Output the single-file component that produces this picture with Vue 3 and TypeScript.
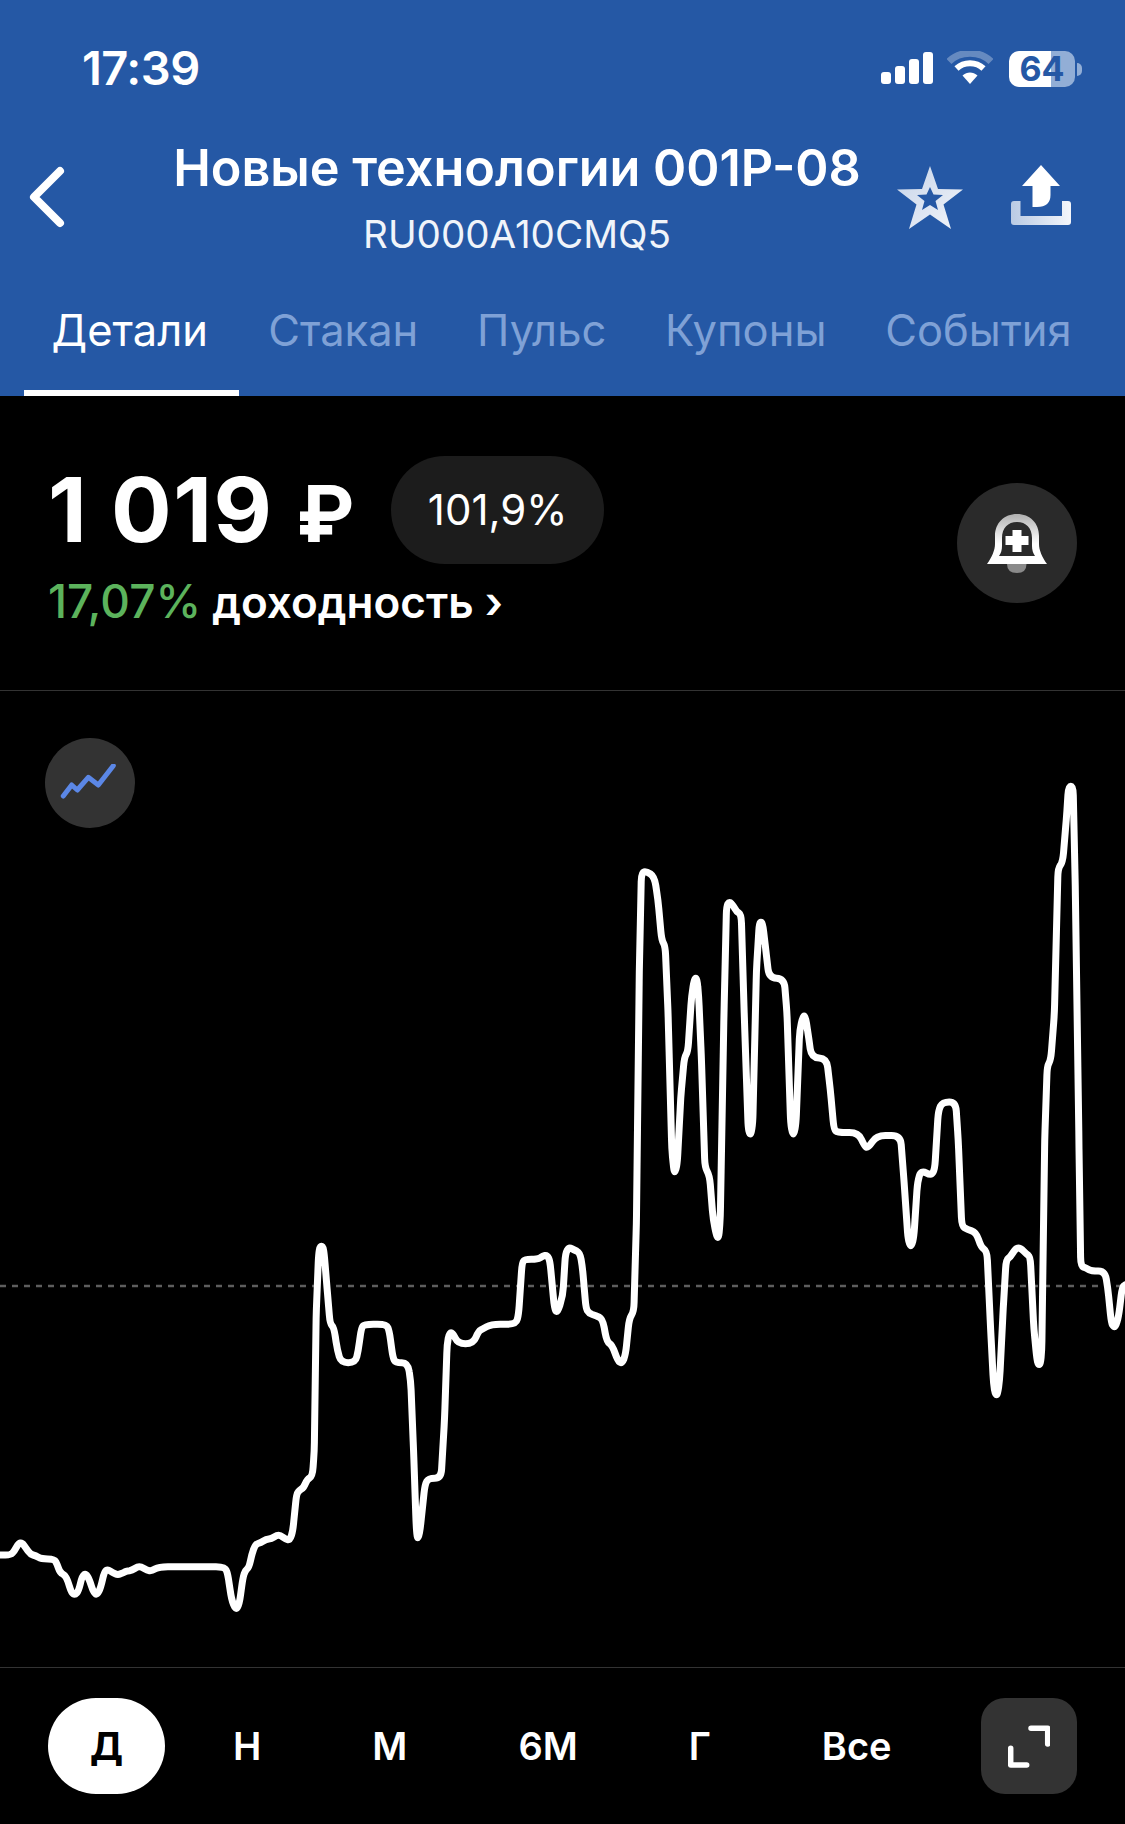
<script setup lang="ts">
type Pt = [number, number]

// line traced from the two chart crops, brought back to page coordinates
const leftRaw: Pt[] = [[0,1212],[30,1212],[40,1200],[52,1177],[62,1175],[72,1190],[85,1210],[100,1214],[115,1224],[152,1224],[160,1240],[168,1265],[182,1272],[190,1290],[200,1325],[210,1332],[220,1320],[230,1275],[240,1268],[250,1285],[262,1325],[272,1332],[282,1310],[292,1262],[302,1255],[315,1265],[330,1272],[345,1265],[355,1260],[370,1258],[385,1247],[395,1247],[412,1258],[425,1260],[445,1247],[630,1247],[638,1270],[648,1345],[660,1378],[670,1360],[680,1280],[687,1258],[697,1250],[705,1210],[715,1180],[730,1175],[745,1165],[760,1163],[775,1153],[785,1153],[800,1165],[812,1167],[820,1140],[830,1030],[838,1018],[850,1010],[860,985],[875,975],[880,900],[885,500],[892,310],[896,286],[904,286],[908,310],[918,440],[924,518],[935,530],[945,600],[955,635],[995,635],[1003,600],[1012,530],[1020,520],[1082,520],[1090,540],[1100,620],[1108,635],[1142,635],[1150,690],[1158,900],[1165,1120],[1168,1160],[1172,1160],[1177,1130],[1190,1000],[1200,982],[1235,982],[1245,800],[1252,580],[1258,545],[1268,545],[1282,578],[1325,578],[1340,540],[1350,535],[1375,520],[1445,520],[1452,490],[1462,335],[1470,325],[1505,325],[1520,315],[1532,312],[1540,330],[1552,470],[1560,488]]
const rightRaw: Pt[] = [[8,1270],[15,1170],[25,1155],[40,1162],[55,1168],[62,1200],[72,1300],[80,1312],[100,1318],[118,1325],[130,1380],[145,1388],[160,1425],[172,1432],[182,1410],[192,1325],[205,1308],[212,1100],[220,500],[226,265],[240,262],[262,275],[272,330],[282,425],[292,440],[300,600],[310,920],[316,976],[321,976],[326,950],[335,800],[345,705],[355,690],[365,560],[373,516],[380,516],[385,560],[392,700],[402,965],[415,985],[425,1090],[435,1132],[441,1132],[445,1080],[455,600],[462,345],[470,333],[482,345],[490,358],[503,365],[512,620],[522,870],[526,886],[530,886],[535,860],[545,500],[553,383],[562,383],[570,440],[580,515],[622,517],[630,600],[640,860],[645,886],[650,886],[655,860],[665,640],[674,606],[681,606],[687,640],[698,705],[740,707],[750,780],[760,875],[770,883],[828,883],[845,915],[855,920],[878,890],[945,890],[955,1000],[965,1130],[971,1152],[976,1152],[982,1130],[992,1000],[1002,972],[1030,985],[1040,970],[1050,830],[1062,810],[1098,810],[1105,900],[1115,1105],[1130,1113],[1155,1120],[1168,1155],[1185,1165],[1195,1350],[1203,1480],[1208,1506],[1214,1506],[1220,1470],[1230,1300],[1238,1185],[1250,1178],[1265,1157],[1278,1157],[1295,1172],[1305,1178],[1315,1350],[1323,1420],[1327,1434],[1333,1434],[1337,1400],[1345,900],[1352,725],[1362,710],[1372,600],[1382,255],[1395,240],[1405,140],[1411,60],[1424,60],[1430,300],[1440,900],[1445,1200],[1460,1205],[1475,1212],[1512,1212],[1520,1250],[1530,1335],[1536,1344],[1542,1344],[1550,1320],[1560,1250],[1568,1245]]

const points: Pt[] = [
  ...leftRaw.map(([x, y]): Pt => [x / 2.8, 1150 + y / 3]),
  ...rightRaw.map(([x, y]): Pt => [560 + x / 2.775, 760 + y / 2.376]),
]

// rounds each corner, but only over the last few px so the flat parts stay flat
function smooth(pts: Pt[], radius = 9) {
  const f = (n: number) => n.toFixed(1)
  let d = `M${f(pts[0][0])} ${f(pts[0][1])}`
  for (let i = 1; i < pts.length - 1; i++) {
    const [x, y] = pts[i]
    const [px, py] = pts[i - 1]
    const [nx, ny] = pts[i + 1]
    const t1 = Math.min(0.5, radius / Math.hypot(px - x, py - y))
    const t2 = Math.min(0.5, radius / Math.hypot(nx - x, ny - y))
    d += ` L${f(x + (px - x) * t1)} ${f(y + (py - y) * t1)}`
    d += ` Q${f(x)} ${f(y)} ${f(x + (nx - x) * t2)} ${f(y + (ny - y) * t2)}`
  }
  const last = pts[pts.length - 1]
  return d + ` L${f(last[0])} ${f(last[1])}`
}

const linePath = smooth(points)
const tabs = ['Детали', 'Стакан', 'Пульс', 'Купоны', 'События']
const ranges = ['Д', 'Н', 'М', '6М', 'Г', 'Все']
</script>

<template>
  <div class="screen">
    <header class="top">
      <div class="status">
        <span class="time">17:39</span>
        <div class="status-icons">
          <svg width="52" height="34" viewBox="0 0 52 34" fill="#fff">
            <rect x="0" y="21" width="10" height="12" rx="3" />
            <rect x="14" y="15" width="10" height="18" rx="3" />
            <rect x="28" y="8" width="10" height="25" rx="3" />
            <rect x="42" y="1" width="10" height="32" rx="3" />
          </svg>
          <svg class="wifi" width="46" height="34" viewBox="0 0 46 34" fill="none">
            <path d="M2 10.5 C13 -0.5 33 -0.5 44 10.5" stroke="#fff" stroke-opacity=".3" stroke-width="7" />
            <path d="M9.5 17.5 C17 10.5 29 10.5 36.5 17.5" stroke="#fff" stroke-width="6" />
            <path d="M15.5 24.5 L23 33 L30.5 24.5 C26 20.5 20 20.5 15.5 24.5Z" fill="#fff" />
          </svg>
          <div class="battery">
            <div class="battery-body"><span>64</span></div>
            <i class="battery-nub"></i>
          </div>
        </div>
      </div>

      <div class="nav">
        <svg class="back" width="36" height="62" viewBox="0 0 36 62" fill="none">
          <path d="M31 5 L5 31 L31 57" stroke="#fff" stroke-width="8" stroke-linecap="round" stroke-linejoin="round" />
        </svg>
        <div class="titles">
          <div class="title">Новые технологии 001P-08</div>
          <div class="isin">RU000A10CMQ5</div>
        </div>
        <svg class="star" width="66" height="63" viewBox="0 0 66 63">
          <defs>
            <linearGradient id="starFill" x1="0" y1="0" x2="1" y2="1">
              <stop offset="0" stop-color="#c6d3e8" />
              <stop offset="1" stop-color="#f2f5fa" />
            </linearGradient>
          </defs>
          <path fill="url(#starFill)" fill-rule="evenodd" d="M33 0 L41 23 L66 23.5 L46.5 38.5 L54 63 L33 48.5 L12 63 L19.5 38.5 L0 23.5 L25 23Z M33 21 L29.5 28.5 L20 29 L27.5 35 L25 44 L33 39 L41 44 L38.5 35 L46 29 L36.5 28.5Z" />
        </svg>
        <svg class="share" width="60" height="62" viewBox="0 0 60 62">
          <defs>
            <linearGradient id="trayFill" x1="0" y1="0" x2="1" y2="0">
              <stop offset="0" stop-color="#b9cae4" />
              <stop offset="1" stop-color="#f4f6fb" />
            </linearGradient>
          </defs>
          <path fill="url(#trayFill)" d="M3 36 H9.5 V51 H51 V36 H57 Q60 36 60 39 V57 Q60 60 57 60 H3 Q0 60 0 57 V39 Q0 36 3 36Z" />
          <path fill="#fff" d="M30 0 L49 21 H39.5 V30 Q39.5 42 26 42 H21.5 V21 H11Z" />
        </svg>
      </div>

      <nav class="tabs">
        <a v-for="(tab, i) in tabs" :key="tab" class="tab" :class="{ on: i === 0 }">{{ tab }}</a>
      </nav>
    </header>

    <section class="quote">
      <div class="quote-main">
        <div class="price-row">
          <span class="price">1 019 <span class="rub">₽</span></span>
          <span class="percent">101,9%</span>
        </div>
        <div class="yield"><b>17,07%</b> доходность ›</div>
      </div>
      <button class="bell">
        <svg width="60" height="60" viewBox="0 0 60 60">
          <defs>
            <linearGradient id="bellFill" x1="0" y1="0" x2="0" y2="1">
              <stop offset="0" stop-color="#b0b0b0" />
              <stop offset=".6" stop-color="#fff" />
            </linearGradient>
          </defs>
          <path d="M20 48 H39.5 V50 Q39.5 59 30 59 Q20 59 20 50Z" fill="#8a8a8a" />
          <path fill="url(#bellFill)" d="M30 0 C43 0 52 9 52 22 V30 C52 36 55 43 60 50 H0 C5 43 8 36 8 30 V22 C8 9 17 0 30 0Z" />
          <path fill="#2a2a2a" d="M30 8 C39 8 45 14 45 24 V32 C45 36 46 39 48 42 H12 C14 39 15 36 15 32 V24 C15 14 21 8 30 8Z" />
          <path fill="#fff" d="M25.5 16 H34.5 V22 H41.5 V31 H34.5 V38 H25.5 V31 H18.5 V22 H25.5Z" />
        </svg>
      </button>
    </section>

    <section class="chart">
      <svg class="plot" width="1125" height="976" viewBox="0 690 1125 976" fill="none">
        <line x1="0" y1="1285" x2="1125" y2="1285" stroke="#5e5e5e" stroke-width="2.5" stroke-dasharray="6 6" />
        <path :d="linePath" stroke="#fff" stroke-width="7" stroke-linejoin="round" stroke-linecap="round" />
      </svg>
      <button class="mode">
        <svg width="60" height="38" viewBox="0 0 60 38" fill="none">
          <path d="M3.3 32 L11.7 21 L17.3 26 L28.3 13.3 L38.3 21 L53.3 1.7" stroke="#5b87e6" stroke-width="5" stroke-linecap="round" stroke-linejoin="round" />
        </svg>
      </button>
    </section>

    <footer class="ranges">
      <button v-for="(r, i) in ranges" :key="r" class="range" :class="{ on: i === 0 }">{{ r }}</button>
      <button class="expand">
        <svg width="42" height="44" viewBox="0 0 42 44" fill="none" stroke="#fff" stroke-width="5.5" stroke-linecap="round" stroke-linejoin="round">
          <path d="M23 4.3 H39.7 V20" />
          <path d="M2.7 24.3 V41 H18.7" />
        </svg>
      </button>
    </footer>
  </div>
</template>

<style>
html, body { background: #000; }
</style>

<style scoped>
.screen {
  width: 1125px;
  height: 1824px;
  display: flex;
  flex-direction: column;
  background: #000;
  color: #fff;
  font-family: Inter, "Noto Sans", sans-serif;
  overflow: hidden;
}
button { border: none; padding: 0; font-family: inherit; color: inherit; }

.top { height: 396px; background: #2558a5; flex: none; }
.status { height: 137px; padding: 47px 43px 0 82px; display: flex; justify-content: space-between; box-sizing: border-box; }
.time { font-size: 47px; font-weight: 600; line-height: 42px; letter-spacing: -0.5px; }
.status-icons { display: flex; align-items: flex-start; padding-top: 4px; }
.wifi { margin-left: 14px; }
.battery { margin-left: 16px; display: flex; align-items: center; height: 36px; margin-top: 0; }
.battery-body {
  width: 66px;
  height: 36px;
  border-radius: 10px;
  background: linear-gradient(90deg, #fff 0 42px, #92aed6 42px);
  color: #2558a5;
  font-size: 34px;
  font-weight: 700;
  line-height: 36px;
  text-align: center;
}
.battery-nub { width: 5px; height: 13px; margin-left: 2px; border-radius: 0 6px 6px 0; background: #92aed6; }

.nav { height: 114px; display: flex; }
.back { margin: 29px 0 0 29px; flex: none; }
.titles { width: 790px; margin-left: 57px; text-align: center; flex: none; padding-top: 5px; }
.title { font-size: 50.4px; font-weight: 600; line-height: 52px; white-space: nowrap; }
.isin { font-size: 38.6px; line-height: 48px; margin-top: 16px; color: #f0f4fa; }
.star { margin: 29px 0 0 -15px; flex: none; }
.share { margin: 28px 0 0 48px; flex: none; }

.tabs { height: 145px; display: flex; box-sizing: border-box; padding: 0 24px; }
.tab { font-size: 43.5px; line-height: 60px; padding: 49px 29.4px 0; height: 145px; box-sizing: border-box; color: #7fa1d6; white-space: nowrap; }
.tab.on { color: #fff; border-bottom: 6px solid #fff; padding: 49px 30.8px 0 27.5px; }

.quote { height: 295px; flex: none; display: flex; justify-content: space-between; padding: 0 48px; border-bottom: 1px solid #333; box-sizing: border-box; }
.quote-main { padding-top: 60px; }
.price-row { display: flex; align-items: center; gap: 37px; height: 108px; }
.price { font-size: 90px; font-weight: 700; line-height: 108px; height: 108px; letter-spacing: 1.5px; white-space: nowrap; }
.rub { font-size: 78px; line-height: 1; letter-spacing: 0; }
.percent { display: block; width: 213px; height: 108px; border-radius: 54px; background: #1c1c1c; font-size: 42px; line-height: 108px; text-align: center; }
.yield { font-size: 44px; font-weight: 600; line-height: 50px; margin-top: 12px; }
.yield b { color: #5cb35c; font-size: 46px; font-weight: 500; }
.bell { width: 120px; height: 120px; margin-top: 87px; border-radius: 50%; background: #2a2a2a; display: flex; align-items: center; justify-content: center; padding-top: 2px; box-sizing: border-box; }

.chart { position: relative; height: 977px; flex: none; border-bottom: 1px solid #333; box-sizing: border-box; }
.plot { display: block; }
.mode { position: absolute; left: 45px; top: 47px; width: 90px; height: 90px; border-radius: 50%; background: #333; display: flex; align-items: center; justify-content: center; }

.ranges { flex: 1; display: flex; align-items: flex-start; gap: 111px; padding: 30px 48px 0; }
.range { flex: none; height: 96px; background: none; font-size: 38px; font-weight: 600; line-height: 96px; }
.range.on { width: 117px; margin-right: -43px; border-radius: 48px; background: #fff; color: #000; font-weight: 700; }
.expand { flex: none; width: 96px; height: 96px; margin-left: -22px; border-radius: 24px; background: #333; display: flex; align-items: center; justify-content: center; }
</style>
